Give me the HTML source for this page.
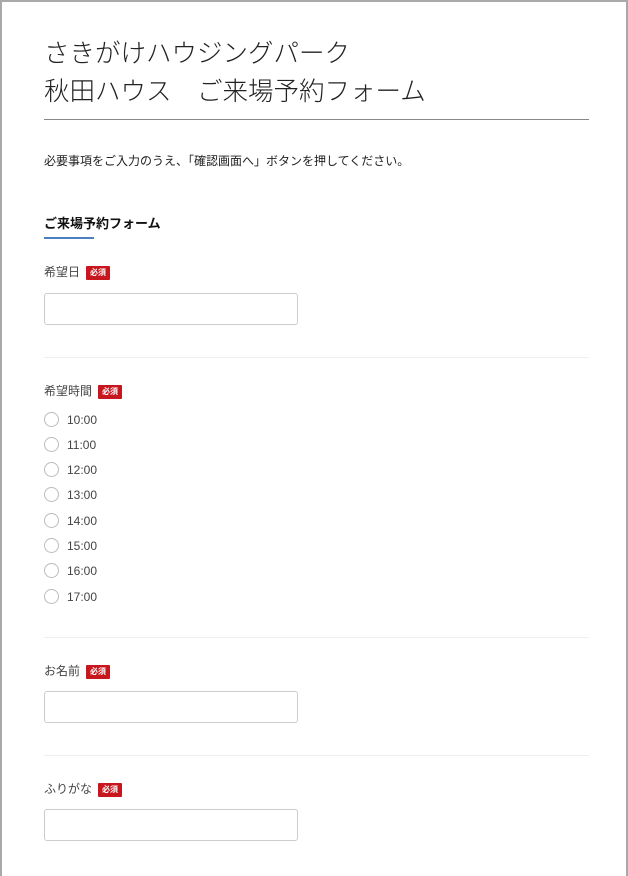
<!DOCTYPE html><html><head><meta charset="utf-8"><style>
*{margin:0;padding:0;box-sizing:border-box}
body{width:628px;height:876px;overflow:hidden;background:#fff;font-family:"Liberation Sans","Noto Sans CJK JP",sans-serif;color:#333;position:relative}
.frame{position:absolute;left:0;top:0;width:628px;height:876px;border:2px solid #a9a9a9;border-bottom:none}
.a{position:absolute;white-space:nowrap}
.t{left:44px;font-size:25.5px;color:#222;font-weight:300;line-height:30px}
.hr{position:absolute;left:44px;width:545px;height:1px}
.lbl{left:44px;font-size:12px;color:#444;line-height:16px}
.b{display:inline-block;background:#c8161e;color:#fff;font-size:8px;font-weight:bold;padding:2px 4px;margin-left:6px;vertical-align:1px;line-height:10px;border-radius:1px}
.in{position:absolute;left:44px;width:254px;height:32px;border:1px solid #ccc;border-radius:3px}
.r{left:44px;font-size:12px;color:#444;line-height:16px}
.r i{display:inline-block;width:15px;height:15px;border:1px solid #bbb;border-radius:50%;vertical-align:-3px;margin-right:8px}
</style></head><body>
<div class="frame"></div>
<div class="a t" style="top:39px">さきがけハウジングパーク</div>
<div class="a t" style="top:77px">秋田ハウス　ご来場予約フォーム</div>
<div class="hr" style="top:119px;background:#888"></div>
<div class="a" style="left:44px;top:152px;font-size:12px;color:#222">必要事項をご入力のうえ、「確認画面へ」ボタンを押してください。</div>
<div class="a" style="left:44px;top:213px;font-size:13px;font-weight:bold;color:#111">ご来場予約フォーム</div>
<div class="hr" style="top:237px;width:50px;height:2px;background:#4a7fc1"></div>
<div class="a lbl" style="top:264px">希望日<span class="b">必須</span></div>
<div class="in" style="top:293px"></div>
<div class="hr" style="top:357px;background:#eee"></div>
<div class="a lbl" style="top:383px">希望時間<span class="b">必須</span></div>
<div class="a r" style="top:412px"><i></i>10:00</div>
<div class="a r" style="top:437px"><i></i>11:00</div>
<div class="a r" style="top:462px"><i></i>12:00</div>
<div class="a r" style="top:487px"><i></i>13:00</div>
<div class="a r" style="top:513px"><i></i>14:00</div>
<div class="a r" style="top:538px"><i></i>15:00</div>
<div class="a r" style="top:563px"><i></i>16:00</div>
<div class="a r" style="top:589px"><i></i>17:00</div>
<div class="hr" style="top:637px;background:#eee"></div>
<div class="a lbl" style="top:663px">お名前<span class="b">必須</span></div>
<div class="in" style="top:691px"></div>
<div class="hr" style="top:755px;background:#eee"></div>
<div class="a lbl" style="top:781px">ふりがな<span class="b">必須</span></div>
<div class="in" style="top:809px"></div>
</body></html>
